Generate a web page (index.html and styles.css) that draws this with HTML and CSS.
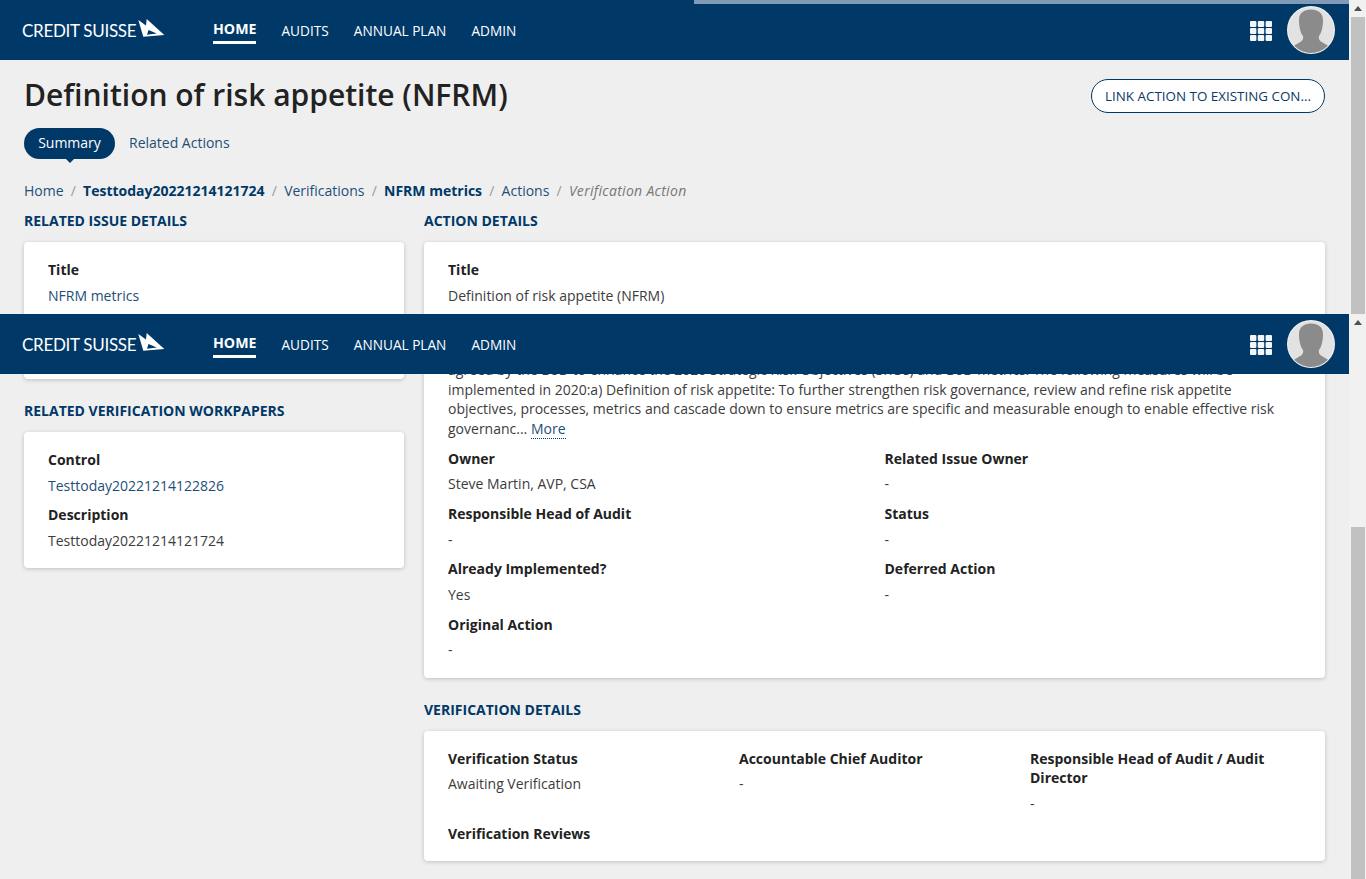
FILE: index.html
```html
<!DOCTYPE html>
<html lang="en">
<head>
    <meta charset="UTF-8">
    <meta name="viewport" content="width=device-width, initial-scale=1.0">
    <title>Definition of risk appetite (NFRM)</title>
    <link rel="stylesheet" href="styles.css">
</head>
<body>
    <div class="shell">
        <div class="page">
            <div class="progress"></div>
            <header class="topbar">
                <a class="logo" href="#"><span class="logo-text">CREDIT SUISSE</span>
                    <svg class="logo-sail" viewBox="0 0 27 20"><path d="M0.300 1 L8 6.500 L8.700 0 L26.300 16 L5.300 17.700 Z M10.500 11 L18.700 14.500 L9 15.700 Z" fill="#fff" fill-rule="evenodd"/></svg>
                </a>
                <nav class="mainnav">
                    <a class="navlink active" href="#">HOME</a>
                    <a class="navlink" href="#">AUDITS</a>
                    <a class="navlink" href="#">ANNUAL PLAN</a>
                    <a class="navlink" href="#">ADMIN</a>
                </nav>
                <svg class="apps" viewBox="0 0 22 20"><g fill="#f2f6fa"><rect width="6.4" height="6" rx="1"/><rect x="7.8" width="6.4" height="6" rx="1"/><rect x="15.6" width="6.4" height="6" rx="1"/><rect y="7" width="6.4" height="6" rx="1"/><rect x="7.8" y="7" width="6.4" height="6" rx="1"/><rect x="15.6" y="7" width="6.4" height="6" rx="1"/><rect y="14" width="6.4" height="6" rx="1"/><rect x="7.8" y="14" width="6.4" height="6" rx="1"/><rect x="15.6" y="14" width="6.4" height="6" rx="1"/></g></svg>
                <svg class="avatar" viewBox="0 0 48 48"><defs><clipPath id="round"><circle cx="24" cy="24" r="23"/></clipPath></defs><circle cx="24" cy="24" r="24" fill="#f3f3f3"/><circle cx="24" cy="24" r="23" fill="#e2e2e2"/><path clip-path="url(#round)" d="M24 3.500 C17 3.500 12 7 12 14 C12 21 13.500 27 16 30 C16.500 32 16 34 14 35.500 L5 41 L12 48 L36 48 L43 41 L34 35.500 C32 34 31.500 32 32 30 C34.500 27 36 21 36 14 C36 7 31 3.500 24 3.500 Z" fill="#8b8b8b"/></svg>
            </header>

            <!-- second copy of the bar, floats over the content -->
            <header class="topbar topbar-float">
                <a class="logo" href="#"><span class="logo-text">CREDIT SUISSE</span>
                    <svg class="logo-sail" viewBox="0 0 27 20"><path d="M0.300 1 L8 6.500 L8.700 0 L26.300 16 L5.300 17.700 Z M10.500 11 L18.700 14.500 L9 15.700 Z" fill="#fff" fill-rule="evenodd"/></svg>
                </a>
                <nav class="mainnav">
                    <a class="navlink active" href="#">HOME</a>
                    <a class="navlink" href="#">AUDITS</a>
                    <a class="navlink" href="#">ANNUAL PLAN</a>
                    <a class="navlink" href="#">ADMIN</a>
                </nav>
                <svg class="apps" viewBox="0 0 22 20"><g fill="#f2f6fa"><rect width="6.4" height="6" rx="1"/><rect x="7.8" width="6.4" height="6" rx="1"/><rect x="15.6" width="6.4" height="6" rx="1"/><rect y="7" width="6.4" height="6" rx="1"/><rect x="7.8" y="7" width="6.4" height="6" rx="1"/><rect x="15.6" y="7" width="6.4" height="6" rx="1"/><rect y="14" width="6.4" height="6" rx="1"/><rect x="7.8" y="14" width="6.4" height="6" rx="1"/><rect x="15.6" y="14" width="6.4" height="6" rx="1"/></g></svg>
                <svg class="avatar" viewBox="0 0 48 48"><circle cx="24" cy="24" r="24" fill="#f3f3f3"/><circle cx="24" cy="24" r="23" fill="#e2e2e2"/><path clip-path="url(#round)" d="M24 3.500 C17 3.500 12 7 12 14 C12 21 13.500 27 16 30 C16.500 32 16 34 14 35.500 L5 41 L12 48 L36 48 L43 41 L34 35.500 C32 34 31.500 32 32 30 C34.500 27 36 21 36 14 C36 7 31 3.500 24 3.500 Z" fill="#8b8b8b"/></svg>
            </header>

            <main class="content">
                <div class="titlerow">
                    <h1>Definition of risk appetite (NFRM)</h1>
                    <button class="linkbtn" type="button">LINK ACTION TO EXISTING CON...</button>
                </div>

                <div class="tabs">
                    <a class="tab active" href="#">Summary</a>
                    <a class="tab" href="#">Related Actions</a>
                </div>

                <div class="crumbs">
                    <a href="#">Home</a><i>/</i>
                    <a class="strong" href="#">Testtoday20221214121724</a><i>/</i>
                    <a href="#">Verifications</a><i>/</i>
                    <a class="strong" href="#">NFRM metrics</a><i>/</i>
                    <a href="#">Actions</a><i>/</i>
                    <em>Verification Action</em>
                </div>

                <div class="columns">
                    <div class="col-left">
                        <h2>RELATED ISSUE DETAILS</h2>
                        <section class="card card-issue">
                            <div class="field"><div class="lbl">Title</div><div class="val"><a href="#">NFRM metrics</a></div></div>
                        </section>

                        <h2 class="next">RELATED VERIFICATION WORKPAPERS</h2>
                        <section class="card">
                            <div class="field"><div class="lbl">Control</div><div class="val"><a href="#">Testtoday20221214122826</a></div></div>
                            <div class="field"><div class="lbl">Description</div><div class="val">Testtoday20221214121724</div></div>
                        </section>
                    </div>

                    <div class="col-right">
                        <h2>ACTION DETAILS</h2>
                        <section class="card">
                            <div class="field"><div class="lbl">Title</div><div class="val">Definition of risk appetite (NFRM)</div></div>
                            <div class="field">
                                <div class="val long">agreed by the BoD to enhance the 2020 Strategic Risk Objectives (SROs) and BoD metrics. The following measures will be implemented in 2020:a) Definition of risk appetite: To further strengthen risk governance, review and refine risk appetite objectives, processes, metrics and cascade down to ensure metrics are specific and measurable enough to enable effective risk governanc... <a class="more" href="#">More</a></div>
                            </div>
                            <div class="pairs">
                                <div class="field"><div class="lbl">Owner</div><div class="val">Steve Martin, AVP, CSA</div></div>
                                <div class="field"><div class="lbl">Related Issue Owner</div><div class="val">-</div></div>
                                <div class="field"><div class="lbl">Responsible Head of Audit</div><div class="val">-</div></div>
                                <div class="field"><div class="lbl">Status</div><div class="val">-</div></div>
                                <div class="field"><div class="lbl">Already Implemented?</div><div class="val">Yes</div></div>
                                <div class="field"><div class="lbl">Deferred Action</div><div class="val">-</div></div>
                                <div class="field"><div class="lbl">Original Action</div><div class="val">-</div></div>
                            </div>
                        </section>

                        <h2 class="next">VERIFICATION DETAILS</h2>
                        <section class="card">
                            <div class="triples">
                                <div class="field"><div class="lbl">Verification Status</div><div class="val">Awaiting Verification</div></div>
                                <div class="field"><div class="lbl">Accountable Chief Auditor</div><div class="val">-</div></div>
                                <div class="field"><div class="lbl">Responsible Head of Audit / Audit Director</div><div class="val">-</div></div>
                                <div class="field"><div class="lbl lbl-only">Verification Reviews</div></div>
                            </div>
                        </section>
                    </div>
                </div>
            </main>
        </div>

        <div class="scrollbar">
            <div class="arrow"></div>
            <div class="thumb thumb-top"></div>
            <div class="arrow"></div>
            <div class="thumb thumb-bottom"></div>
        </div>
    </div>
</body>
</html>
```

FILE: styles.css
```css
html, body {
    margin: 0;
    height: 100%;
    overflow: hidden;
}
body {
    font-family: "Open Sans", Arial, sans-serif;
    font-size: 14px;
    color: #333;
    background-color: #efefef;
}
a {
    color: #1d4f78;
    text-decoration: none;
}
.shell {
    display: flex;
    height: 879px;
}
.page {
    position: relative;
    width: 1349px;
    flex: none;
}
.progress {
    position: absolute;
    top: 0;
    left: 694px;
    right: 0;
    height: 4px;
    background-color: #7f9bb5;
    z-index: 3;
}
.topbar {
    display: flex;
    align-items: center;
    height: 60px;
    background-color: #003868;
    padding: 0 14px 0 23px;
    box-sizing: border-box;
}
.topbar-float {
    position: absolute;
    top: 314px;
    left: 0;
    right: 0;
    z-index: 2;
}
.logo {
    display: flex;
    align-items: center;
    width: 190px;
    flex: none;
}
.logo-text {
    font-family: "Lato", "Open Sans", sans-serif;
    font-size: 17px;
    color: #fff;
    letter-spacing: -0.3px;
    width: 115px;
    margin-left: -1px;
    padding-right: 1px;
    white-space: nowrap;
}
.logo-sail {
    width: 27px;
    height: 20px;
    margin-top: -3px;
}
.mainnav {
    display: flex;
    align-items: center;
    gap: 25px;
    flex: 1;
}
.navlink {
    color: #fff;
    font-size: 13.65px;
    line-height: 20px;
    margin-top: 1px;
}
.navlink.active {
    font-size: 14.2px;
    font-weight: 700;
    padding: 2px 0;
    border-bottom: 3px solid #fff;
}
.apps {
    width: 22px;
    height: 20px;
    margin-right: 15px;
    margin-top: 2px;
}
.avatar {
    width: 48px;
    height: 48px;
}
.content {
    padding: 0 24px;
}
.titlerow {
    display: flex;
    align-items: center;
    justify-content: space-between;
    height: 68px;
    margin-top: 2px;
}
h1 {
    margin: 0 0 2px;
    font-size: 30px;
    font-weight: 600;
    color: #222;
    line-height: 38px;
}
.linkbtn {
    width: 234px;
    height: 34px;
    padding: 0;
    background-color: #fff;
    border: 1px solid #003868;
    border-radius: 17px;
    color: #0b3a66;
    font-family: inherit;
    font-size: 13.4px;
    font-weight: 500;
    white-space: nowrap;
}
.tabs {
    display: flex;
    align-items: center;
    height: 31px;
    margin-top: -2px;
}
.tab {
    line-height: 30px;
    padding: 0 14px 1px;
    border-radius: 16px;
}
.tab.active {
    position: relative;
    width: 63px;
    text-align: center;
    background-color: #003868;
    color: #fff;
    font-weight: 500;
}
.tab.active::after {
    content: "";
    position: absolute;
    left: 50%;
    bottom: -4px;
    margin-left: -4px;
    border-left: 4px solid transparent;
    border-right: 4px solid transparent;
    border-top: 4px solid #003868;
}
.crumbs {
    display: flex;
    align-items: center;
    height: 20px;
    margin-top: 22px;
    line-height: 20px;
}
.crumbs a.strong {
    color: #003868;
    font-weight: 700;
}
.crumbs i {
    color: #999;
    font-style: normal;
    margin: 0 7.2px;
}
.crumbs em {
    color: #777;
    letter-spacing: 0.3px;
}
.columns {
    display: flex;
    gap: 20px;
    margin-top: 10px;
}
.col-left {
    width: 380px;
    flex: none;
}
.col-right {
    flex: 1;
    min-width: 0;
}
h2 {
    margin: 0 0 11px;
    font-size: 14px;
    line-height: 20px;
    font-weight: 700;
    color: #003868;
}
h2.next {
    margin-top: 22px;
}
.card {
    background-color: #fff;
    border-radius: 4px;
    box-shadow: 0 1px 4px rgba(0, 0, 0, 0.2);
    padding: 18px 24px;
}
.card-issue {
    box-sizing: border-box;
    height: 137px;
}
.field {
    margin-bottom: 10.3px;
}
.card > .field:last-child,
.pairs .field:last-child,
.triples .field:last-child {
    margin-bottom: 0;
}
.lbl {
    font-weight: 700;
    color: #222;
    line-height: 19.5px;
    margin-bottom: 6px;
}
.lbl-only {
    margin-bottom: 0;
}
.val {
    line-height: 19.5px;
    color: #3c3c3c;
}
/* top of this value sits under the floating bar */
.long {
    margin-top: 55.3px;
    margin-bottom: 10.6px;
}
.more {
    border-bottom: 1px dotted #003868;
}
.pairs {
    display: grid;
    grid-template-columns: 436.5px 1fr;
}
.triples {
    display: grid;
    grid-template-columns: 291px 291px 1fr;
}
.scrollbar {
    flex: 1;
    display: flex;
    flex-direction: column;
    align-items: center;
    background-color: #f1f1f1;
}
.arrow {
    margin-top: 6px;
    height: 0;
    border-left: 4px solid transparent;
    border-right: 4px solid transparent;
    border-bottom: 5px solid #505050;
}
.thumb {
    width: 14px;
    background-color: #c1c1c1;
}
.thumb-top {
    height: 297px;
    margin-top: 6px;
}
.thumb-bottom {
    flex: 1;
    margin-top: 202px;
}
```
